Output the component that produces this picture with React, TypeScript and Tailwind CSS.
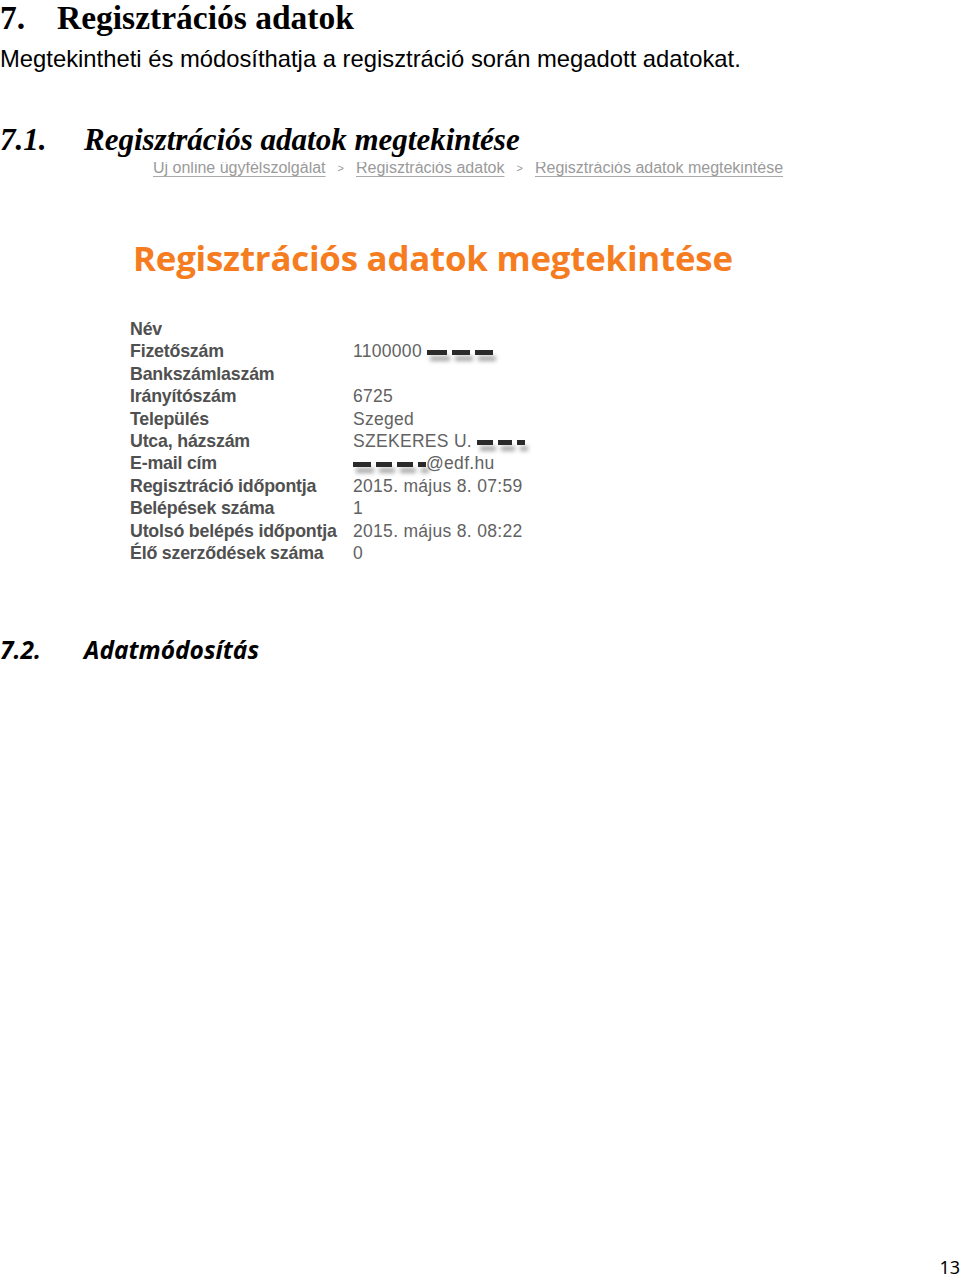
import React from 'react';

const rows: { label: string; value: React.ReactNode }[] = [
  { label: 'Név', value: '' },
  { label: 'Fizetőszám', value: <>1100000 <Blot widths={[20, 18, 18]} /></> },
  { label: 'Bankszámlaszám', value: '' },
  { label: 'Irányítószám', value: '6725' },
  { label: 'Település', value: 'Szeged' },
  { label: 'Utca, házszám', value: <>SZEKERES U. <Blot widths={[16, 14, 8]} /></> },
  { label: 'E-mail cím', value: <><Blot widths={[18, 16, 16, 8]} />@edf.hu</> },
  { label: 'Regisztráció időpontja', value: '2015. május 8. 07:59' },
  { label: 'Belépések száma', value: '1' },
  { label: 'Utolsó belépés időpontja', value: '2015. május 8. 08:22' },
  { label: 'Élő szerződések száma', value: '0' },
];

function Blot({ widths }: { widths: number[] }) {
  return (
    <span className="inline-flex items-center gap-[5px] align-middle">
      {widths.map((w, i) => (
        <span
          key={i}
          className="inline-block h-[5px] bg-[#2a2a2a] shadow-[3px_6px_4px_rgba(0,0,0,0.35)]"
          style={{ width: w }}
        />
      ))}
    </span>
  );
}

export default function App() {
  return (
    <div className="relative w-[960px] h-[1277px] bg-white text-black overflow-hidden">
      {/* 7. */}
      <h1 className="flex font-['Liberation_Serif',serif] font-bold text-[33.5px] leading-[36px]">
        <span className="w-[57px]">7.</span>
        <span>Regisztrációs adatok</span>
      </h1>
      <p className="mt-[9px] font-['Liberation_Sans',Arial,sans-serif] text-[23.8px] leading-[28px]">
        Megtekintheti és módosíthatja a regisztráció során megadott adatokat.
      </p>

      {/* 7.1 */}
      <h2 className="mt-[49px] flex font-['Liberation_Serif',serif] font-bold italic text-[31px] leading-[36px]">
        <span className="w-[84px]">7.1.</span>
        <span>Regisztrációs adatok megtekintése</span>
      </h2>

      {/* képernyőkép */}
      <div className="ml-[130px] w-[700px]">
        <div className="mt-[4px] h-[18px] overflow-hidden">
          <div className="-mt-[4px] ml-[23px] flex items-start gap-[12px] font-['Liberation_Sans',Arial,sans-serif] text-[16px] leading-[20px] text-[#9a9a9a]">
            <span className="underline decoration-[#aaa] underline-offset-[3px]">Új online ügyfélszolgálat</span>
            <span className="text-[11px] leading-[20px]">&gt;</span>
            <span className="underline decoration-[#aaa] underline-offset-[3px]">Regisztrációs adatok</span>
            <span className="text-[11px] leading-[20px]">&gt;</span>
            <span className="underline decoration-[#aaa] underline-offset-[3px]">Regisztrációs adatok megtekintése</span>
          </div>
        </div>

        <div className="mt-[56px] ml-[3px] font-['Open_Sans',sans-serif] font-bold text-[34.8px] leading-[44px] text-[#f57c1f] tracking-[-0.2px]">
          Regisztrációs adatok megtekintése
        </div>

        <div className="mt-[38px] grid grid-cols-[223px_1fr] font-['Liberation_Sans',Arial,sans-serif] leading-[22.4px]">
          {rows.map((r) => (
            <React.Fragment key={r.label}>
              <div className="font-bold text-[17.8px] text-[#505050] tracking-[-0.2px] whitespace-nowrap">{r.label}</div>
              <div className="text-[17.5px] text-[#626262] tracking-[0.3px] whitespace-nowrap">{r.value}</div>
            </React.Fragment>
          ))}
        </div>
      </div>

      {/* 7.2 */}
      <h2 className="mt-[71px] flex font-['Open_Sans',sans-serif] font-bold italic text-[24.5px] leading-[30px]">
        <span className="w-[84px]">7.2.</span>
        <span>Adatmódosítás</span>
      </h2>

      <div className="absolute right-0 bottom-[0px] font-['Noto_Sans',sans-serif] text-[18px] leading-[20px]">13</div>
    </div>
  );
}
